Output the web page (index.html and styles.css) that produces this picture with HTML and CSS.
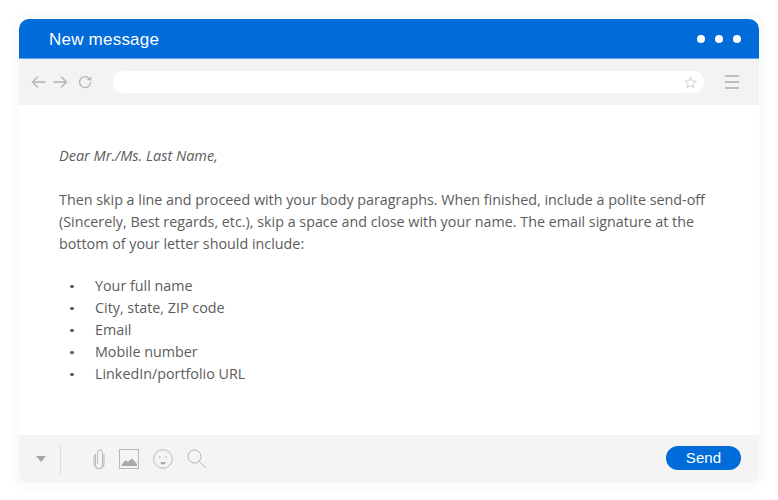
FILE: index.html
```html
<!DOCTYPE html>
<html lang="en">
<head>
<meta charset="utf-8">
<title>New message</title>
<link rel="stylesheet" href="styles.css">
</head>
<body>
<main class="window">
  <header class="titlebar">
    <h1 class="title">New message</h1>
    <div class="dots"><span class="dot"></span><span class="dot"></span><span class="dot"></span></div>
  </header>
  <nav class="toolbar">
    <div class="nav-icons">
      <svg class="nav-icon" width="15" height="14" viewBox="0 0 15 14"><path d="M14.500 7H1.500M7 1.500 1.500 7 7 12.500"/></svg>
      <svg class="nav-icon" width="15" height="14" viewBox="0 0 15 14"><path d="M.5 7h13M8 1.500 13.500 7 8 12.500"/></svg>
      <svg class="nav-icon reload" width="14" height="14" viewBox="0 0 14 14"><path d="M11.200 3.500A5.500 5.500 0 1 0 12.500 7.500"/><path class="fill" d="M8.800 4.500 13 6 13.500 2Z"/></svg>
    </div>
    <div class="address">
      <svg class="star" width="13" height="13" viewBox="0 0 13 13"><path d="M6.500 1.200 8 4.800 11.800 5.200 9 7.700 9.800 11.500 6.500 9.500 3.200 11.500 4 7.700 1.200 5.200 5 4.800Z"/></svg>
    </div>
    <div class="menu"><span class="bar"></span><span class="bar"></span><span class="bar"></span></div>
  </nav>
  <section class="body">
    <p class="greeting">Dear Mr./Ms. Last Name,</p>
    <p class="para">Then skip a line and proceed with your body paragraphs. When finished, include a polite send-off (Sincerely, Best regards, etc.), skip a space and close with your name. The email signature at the bottom of your letter should include:</p>
    <ul class="list">
      <li class="item">Your full name</li>
      <li class="item">City, state, ZIP code</li>
      <li class="item">Email</li>
      <li class="item">Mobile number</li>
      <li class="item">LinkedIn/portfolio URL</li>
    </ul>
  </section>
  <footer class="footer">
    <span class="caret"></span>
    <span class="divider"></span>
    <div class="tools">
      <svg class="tool" width="12" height="20" viewBox="0 0 12 20"><path d="M2.500 5v10a3.500 4.500 0 0 0 7 0V3.500a2.500 2.500 0 0 0-5 0V14.500"/><path d="M1 6v9a5 5 0 0 0 10 0V5"/></svg>
      <svg class="tool image" width="20" height="20" viewBox="0 0 20 20"><rect x=".5" y=".5" width="19" height="19"/><path class="fill" d="M2 17 6.500 11 9 13 12.500 9.500 15 11.500 18 15V17Z"/></svg>
      <svg class="tool" width="20" height="20" viewBox="0 0 20 20"><circle cx="10" cy="10" r="9.300"/><circle class="fill" cx="6.800" cy="8" r=".8"/><circle class="fill" cx="13.200" cy="8" r=".8"/><path class="fill" d="M7.500 13h5a2.500 2.500 0 0 1-5 0Z"/></svg>
      <svg class="tool" width="20" height="20" viewBox="0 0 20 20"><circle cx="7.500" cy="7.500" r="6.500"/><path d="M12.200 12.200 19 19"/></svg>
    </div>
    <button class="send">Send</button>
  </footer>
</main>
</body>
</html>
```
FILE: styles.css
```css
html, body { margin: 0; height: 100%; background: #fff; }
body { padding: 19px 19px 17px; box-sizing: border-box; width: 778px; height: 500px; overflow: hidden; }
.window {
  width: 740px; height: 464px; display: flex; flex-direction: column;
  border-radius: 10px; background: #fff;
  box-shadow: 0 0 0 4px #fbfbfb, 0 0 10px 5px #f8f8f8;
}
.titlebar {
  height: 39px; flex: none; display: flex; align-items: center; justify-content: space-between;
  background: #006cd9; border-radius: 10px 10px 0 0; padding: 0 18px 0 31px;
  border-bottom: 1px solid #5ea6ec;
}
.title { margin: 2px 0 0 -1px; font: 400 17px/1 "Liberation Sans", Arial, sans-serif; color: #fff; letter-spacing: .22px; }
.dots { display: flex; gap: 10px; }
.dot { width: 8px; height: 8px; border-radius: 50%; background: #fff; }
.toolbar {
  height: 46px; flex: none; display: flex; align-items: center; background: #f3f3f3; padding: 0 20px 0 12px; box-sizing: border-box;
}
.nav-icons { display: flex; align-items: center; gap: 7px; width: 82px; }
.nav-icon { fill: none; stroke: #b3b3b3; stroke-width: 1.300; }
.nav-icon .fill { fill: #b3b3b3; stroke: none; }
.reload { margin-left: 3px; }
.address {
  width: 591px; height: 22px; background: #fff; border-radius: 11px;
  display: flex; align-items: center; justify-content: flex-end; padding-right: 7px; box-sizing: border-box;
}
.star { fill: none; stroke: #d8d8d8; stroke-width: 1.100; }
.menu { margin-left: 21px; display: flex; flex-direction: column; gap: 4px; width: 14px; }
.bar { height: 2px; background: #bdbdbd; }
.body {
  flex: 1; padding: 40px 40px 0; font: 400 14.320px/22px "Open Sans", "Noto Sans", sans-serif; color: #5c5c5c;
}
.greeting { margin: 0 0 22px; font-style: italic; font-size: 14.500px; }
.para { margin: 0 0 20px; }
.list { margin: 0; padding: 0; list-style: none; }
.item { display: flex; align-items: center; }
.item::before { content: ""; flex: none; width: 3.500px; height: 3.500px; margin: 1px 21.500px 0 11px; border-radius: 50%; background: #5c5c5c; }
.footer {
  height: 48px; flex: none; display: flex; align-items: center; background: #f4f4f4; border-radius: 0 0 10px 10px; padding: 0 18px 0 17px;
}
.caret { width: 0; height: 0; border-left: 5px solid transparent; border-right: 5px solid transparent; border-top: 6px solid #a6a6a6; }
.divider { width: 1px; height: 30px; background: #dcdcdc; margin-left: 14px; }
.tools { display: flex; align-items: center; gap: 14px; margin-left: 32px; flex: 1; }
.tool { fill: none; stroke: #b8b8b8; stroke-width: 1; }
.tool .fill { fill: #a9a9a9; stroke: none; }
.image { margin-top: -1px; }
.send {
  width: 75px; height: 24px; margin-top: -2px; padding: 0; border: 0; border-radius: 12px; background: #006cd9; color: #fff;
  font: 400 15px/24px "Liberation Sans", Arial, sans-serif; letter-spacing: .1px;
}
```
